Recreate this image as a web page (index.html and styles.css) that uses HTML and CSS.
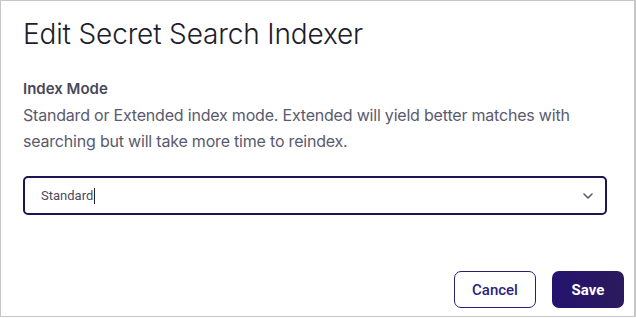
FILE: index.html
```html
<!DOCTYPE html>
<html>
<head>
<meta charset="utf-8">
<link rel="stylesheet" href="styles.css">
</head>
<body>
<div class="dialog">
  <h1 class="title">Edit Secret Search Indexer</h1>
  <div class="field">
    <div class="label">Index Mode</div>
    <div class="help">Standard or Extended index mode. Extended will yield better matches with searching but will take more time to reindex.</div>
    <div class="select">
      <span class="value">Standard</span><span class="caret"></span>
      <svg class="chevron" width="10" height="6" viewBox="0 0 10 6"><path d="M1 1l4 4 4-4" fill="none" stroke="#5a5a6e" stroke-width="1.6" stroke-linecap="round" stroke-linejoin="round"/></svg>
    </div>
  </div>
  <div class="actions">
    <button class="btn btn-cancel">Cancel</button>
    <button class="btn btn-save">Save</button>
  </div>
</div>
</body>
</html>
```
FILE: styles.css
```css
html, body {
  margin: 0;
  padding: 0;
  background: #ffffff;
}
.dialog {
  box-sizing: border-box;
  width: 636px;
  height: 317px;
  border: 1px solid #c6c6c6;
  border-right-width: 2px;
  display: flex;
  flex-direction: column;
  padding: 15px 10px 0 22px;
  font-family: Inter, "Noto Sans", sans-serif;
}
.title {
  margin: 0;
  font-size: 28px;
  line-height: 36px;
  font-weight: 300;
  color: #1d1d2c;
  letter-spacing: -0.15px;
}
.field {
  margin-top: 27px;
  padding-right: 17px;
  display: flex;
  flex-direction: column;
}
.label {
  font-size: 15px;
  line-height: 20px;
  font-weight: 600;
  color: #474759;
}
.help {
  margin-top: 3px;
  font-size: 16px;
  line-height: 26px;
  font-weight: 400;
  color: #5a5a6e;
  letter-spacing: -0.2px;
}
.select {
  margin-top: 22px;
  box-sizing: border-box;
  height: 39px;
  border: 2px solid #1f1352;
  border-radius: 5px;
  display: flex;
  align-items: center;
  padding: 0 12px 0 16px;
  font-family: Roboto, "Liberation Sans", Arial, sans-serif;
  font-size: 13px;
  color: #4a4a62;
}
.value {
  line-height: 16px;
}
.caret {
  display: inline-block;
  width: 1px;
  height: 16px;
  background: #222;
  margin-left: 1px;
}
.chevron {
  margin-left: auto;
}
.actions {
  margin-top: 56px;
  display: flex;
  justify-content: flex-end;
  gap: 16px;
}
.btn {
  box-sizing: border-box;
  height: 37px;
  border-radius: 7px;
  font-family: Roboto, "Liberation Sans", Arial, sans-serif;
  font-size: 15px;
  padding: 0;
  cursor: pointer;
}
.btn-cancel {
  width: 82px;
  background: #ffffff;
  border: 1px solid #2a1c78;
  color: #2d1f7a;
  font-weight: 500;
}
.btn-save {
  width: 72px;
  border: none;
  background: linear-gradient(90deg, #24146f, #2b1a5c);
  color: #ffffff;
  font-weight: 700;
}
```
